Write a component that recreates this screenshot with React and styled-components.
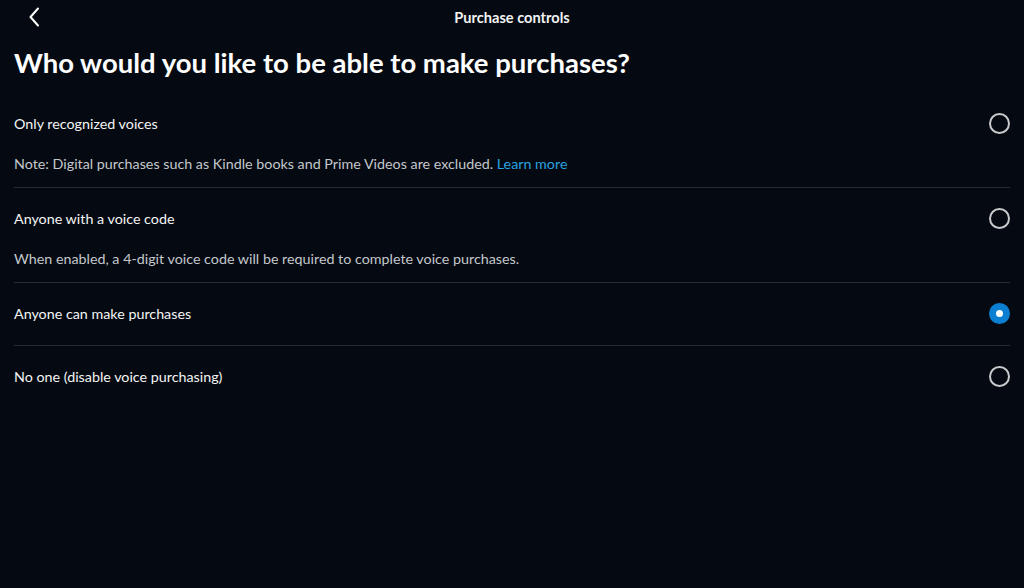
import React, { useState } from "react";
import styled, { createGlobalStyle } from "styled-components";

const Global = createGlobalStyle`
  html, body { margin: 0; padding: 0; background: #050a12; }
  body { font-family: Lato, "Noto Sans", sans-serif; color: #ffffff; }
  * { box-sizing: border-box; }
`;

const Page = styled.div`
  width: 1024px;
  height: 588px;
  background: #050a12;
  overflow: hidden;
`;

const Header = styled.header`
  position: relative;
  height: 35px;
  display: flex;
  align-items: center;
  justify-content: center;
`;

const BackButton = styled.button`
  position: absolute;
  left: 22px;
  top: 4px;
  width: 24px;
  height: 26px;
  padding: 0;
  border: none;
  background: transparent;
  color: #ffffff;
  display: flex;
  align-items: center;
  justify-content: center;
  cursor: pointer;
`;

const HeaderTitle = styled.h1`
  margin: 0;
  font-size: 14.6px;
  font-weight: 700;
  color: #f2f2f2;
`;

const Heading = styled.h2`
  margin: 11px 0 0 14px;
  font-size: 27.5px;
  font-weight: 700;
  line-height: 34px;
  color: #ffffff;
`;

const List = styled.div`
  margin: 13px 14px 0 14px;
  display: flex;
  flex-direction: column;
`;

const Option = styled.div`
  border-bottom: ${(p) => (p.$last ? "none" : "1px solid #262b33")};
  padding: ${(p) => (p.$note ? "18px 0 13px" : "18px 0 20px")};
  cursor: pointer;
`;

const OptionRow = styled.div`
  display: flex;
  align-items: center;
  justify-content: space-between;
  height: 24px;
`;

const OptionLabel = styled.span`
  font-size: 14.3px;
  color: #f4f4f4;
`;

const Note = styled.p`
  margin: 19px 0 0;
  font-size: 14.3px;
  line-height: 20px;
  color: #c4c7cc;
`;

const Link = styled.a`
  color: #2aa1e0;
  text-decoration: none;
`;

const Radio = styled.span`
  width: 21px;
  height: 21px;
  border-radius: 50%;
  flex-shrink: 0;
  display: flex;
  align-items: center;
  justify-content: center;
  border: ${(p) => (p.$checked ? "none" : "2px solid #c9cacc")};
  background: ${(p) => (p.$checked ? "#0b7fd1" : "transparent")};
  &::after {
    content: "";
    display: ${(p) => (p.$checked ? "block" : "none")};
    width: 7px;
    height: 7px;
    border-radius: 50%;
    background: #ffffff;
  }
`;

const options = [
  {
    id: "recognized",
    label: "Only recognized voices",
    note: (
      <>
        Note: Digital purchases such as Kindle books and Prime Videos are excluded.{" "}
        <Link href="#">Learn more</Link>
      </>
    ),
  },
  {
    id: "code",
    label: "Anyone with a voice code",
    note: "When enabled, a 4-digit voice code will be required to complete voice purchases.",
  },
  { id: "anyone", label: "Anyone can make purchases" },
  { id: "none", label: "No one (disable voice purchasing)" },
];

export default function App() {
  const [selected, setSelected] = useState("anyone");
  return (
    <Page>
      <Global />
      <Header>
        <BackButton aria-label="Back">
          <svg width="22" height="24" viewBox="0 0 22 24" fill="none" stroke="currentColor" strokeWidth="2" strokeLinecap="round" strokeLinejoin="round">
            <path d="M15 3.5 L7.5 12 L15 20.5" />
          </svg>
        </BackButton>
        <HeaderTitle>Purchase controls</HeaderTitle>
      </Header>
      <Heading>Who would you like to be able to make purchases?</Heading>
      <List>
        {options.map((o, i) => (
          <Option key={o.id} $note={!!o.note} $last={i === options.length - 1} onClick={() => setSelected(o.id)}>
            <OptionRow>
              <OptionLabel>{o.label}</OptionLabel>
              <Radio $checked={selected === o.id} />
            </OptionRow>
            {o.note && <Note>{o.note}</Note>}
          </Option>
        ))}
      </List>
    </Page>
  );
}
